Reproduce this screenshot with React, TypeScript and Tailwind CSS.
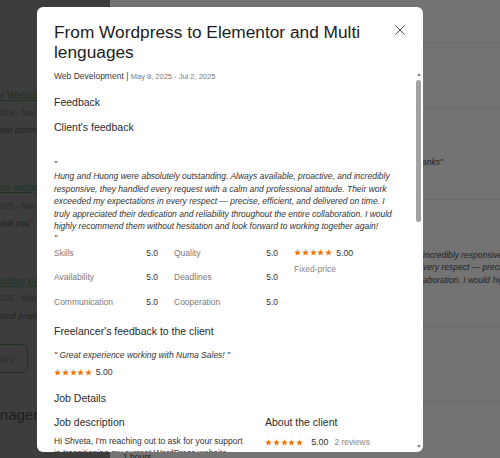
import React from 'react';

// small filled star used for all the rating rows
function Stars({ size = 7 }: { size?: number }) {
  return (
    <div className="flex gap-[0.8px]">
      {[0, 1, 2, 3, 4].map((i) => (
        <svg key={i} width={size} height={size} viewBox="0 0 10 10">
          <polygon
            points="5,0.4 6.35,3.55 9.7,3.8 7.15,6 7.95,9.4 5,7.6 2.05,9.4 2.85,6 0.3,3.8 3.65,3.55"
            fill="#ec7a10"
          />
        </svg>
      ))}
    </div>
  );
}

const ratings = [
  { left: 'Skills', leftValue: '5.0', right: 'Quality', rightValue: '5.0' },
  { left: 'Availability', leftValue: '5.0', right: 'Deadlines', rightValue: '5.0' },
  { left: 'Communication', leftValue: '5.0', right: 'Cooperation', rightValue: '5.0' },
];

const clientFeedback =
  'Hung and Huong were absolutely outstanding. Always available, proactive, and incredibly responsive, they handled every request with a calm and professional attitude. Their work exceeded my expectations in every respect — precise, efficient, and delivered on time. I truly appreciated their dedication and reliability throughout the entire collaboration. I would highly recommend them without hesitation and look forward to working together again!';

function BackgroundPage() {
  return (
    <div className="flex w-full h-full">
      {/* left part of the page, behind the darker overlay */}
      <div className="w-[110px] shrink-0 bg-[#3d3d3d] overflow-hidden pt-[88px] flex flex-col">
        <div className="-ml-[48px] whitespace-nowrap text-[10.5px] leading-[14px] text-[#1f3321] underline">Update our Website</div>
        <div className="-ml-[35px] mt-[5px] whitespace-nowrap text-[8.5px] leading-[12px] text-[#2a2a2a]">Jan 15, 2026 - Mar 2, 2026</div>
        <div className="-ml-[12px] mt-[5px] whitespace-nowrap text-[8.5px] leading-[12.4px] italic text-[#222]">"Great communication and quality"</div>

        <div className="-ml-[40px] mt-[44px] whitespace-nowrap text-[10.5px] leading-[14px] text-[#1f3321] underline">Wordpress webpage</div>
        <div className="-ml-[35px] mt-[6px] whitespace-nowrap text-[8.5px] leading-[12px] text-[#2a2a2a]">Jan 15, 2026 - Mar 2, 2026</div>
        <div className="-ml-[13px] mt-[5px] whitespace-nowrap text-[8.5px] leading-[12.4px] italic text-[#222]">"Thank you"</div>

        <div className="-ml-[12px] mt-[44px] whitespace-nowrap text-[10.5px] leading-[14px] text-[#1f3321] underline">Existing page</div>
        <div className="-ml-[35px] mt-[4px] whitespace-nowrap text-[8.5px] leading-[12px] text-[#2a2a2a]">Jan 15, 2025 - Mar 3, 2025</div>
        <div className="-ml-[8px] mt-[6px] whitespace-nowrap text-[8.5px] leading-[12.4px] italic text-[#222]">"Good project direction"</div>

        <div className="-ml-[40px] mt-[22px] w-[68px] h-[29px] shrink-0 rounded-[6px] border border-[#1f3321] flex items-center justify-end pr-[13px] text-[9.5px] text-[#1f3321]">
          History
        </div>
        <div className="-ml-[21px] mt-[33px] whitespace-nowrap text-[15px] leading-[18px] text-[#1e1e1e]">Manager</div>
      </div>

      {/* right part of the page */}
      <div className="flex-1 bg-[#737373] flex flex-col">
        <div className="h-[43px] shrink-0 border-b border-[#6a6a6a]" />
        <div className="h-[65px] shrink-0 border-b border-[#6a6a6a]" />
        <div className="h-[92px] shrink-0 border-b border-[#6a6a6a] pt-[48px]">
          <div className="w-[333px] text-right text-[8.5px] leading-[12.4px] italic text-[#222]">"Thanks"</div>
        </div>
        <div className="h-[127px] shrink-0 border-b border-[#6a6a6a] pt-[49px] pl-[313px] text-[8.5px] leading-[12.4px] italic text-[#222] whitespace-nowrap">
          <div>incredibly responsive, they handled every</div>
          <div>very respect — precise, efficient, and</div>
          <div>aboration. I would highly recommend</div>
        </div>
        <div className="h-[75px] shrink-0 border-b border-[#6a6a6a]" />
        <div className="pt-[49px] pl-[13px] text-[8.5px] leading-[12px] text-[#222]">1 hours</div>
      </div>
    </div>
  );
}

function FeedbackModal() {
  return (
    <div className="absolute left-[37px] top-[7px] w-[386px] h-[445px] bg-white rounded-[6px] overflow-hidden flex flex-col text-[#222]">
      {/* header */}
      <div className="flex items-start pt-[16px] pl-[17px] pr-[18px]">
        <h2 className="w-[330px] text-[17.3px] leading-[19.5px] text-[#1c1c1c]">
          From Wordpress to Elementor and Multi lenguages
        </h2>
        <button className="ml-auto mt-[1.5px] w-[10px] h-[10px] flex items-center justify-center">
          <svg width="10" height="10" viewBox="0 0 10 10">
            <path d="M0.5 0.5 L9.5 9.5 M9.5 0.5 L0.5 9.5" stroke="#444" strokeWidth="1" />
          </svg>
        </button>
      </div>

      {/* body */}
      <div className="pl-[17px] w-[367px] flex flex-col">
        <div className="mt-[8px] text-[8.5px] leading-[12px] whitespace-nowrap">
          <span className="text-[#3a3a3a]">Web Development</span>
          <span className="text-[#3a3a3a]"> | </span>
          <span className="text-[7.5px] text-[#7a7a7a]">May 8, 2025 - Jul 2, 2025</span>
        </div>

        <h3 className="mt-[12px] text-[10.5px] leading-[14px] text-[#2a2a2a]">Feedback</h3>
        <h4 className="mt-[11px] text-[10.5px] leading-[14px] text-[#2a2a2a]">Client's feedback</h4>

        <p className="mt-[24px] w-[345px] text-[8.5px] leading-[12.4px] italic text-[#333]">
          "
          <br />
          {clientFeedback}
          <br />"
        </p>

        <div className="mt-[2px] grid grid-cols-[104px_104px_1fr] gap-x-4 gap-y-[12.5px] text-[8.5px] leading-[12px]">
          {ratings.map((r, i) => (
            <React.Fragment key={r.left}>
              <div className="flex justify-between">
                <span className="text-[#7a7a7a]">{r.left}</span>
                <span className="text-[#333]">{r.leftValue}</span>
              </div>
              <div className="flex justify-between">
                <span className="text-[#7a7a7a]">{r.right}</span>
                <span className="text-[#333]">{r.rightValue}</span>
              </div>
              {i === 0 ? (
                <div className="row-span-3 flex flex-col">
                  <div className="h-[12px] flex items-center gap-[4px]">
                    <Stars />
                    <span className="text-[8.7px] text-[#333]">5.00</span>
                  </div>
                  <div className="mt-[4.5px] text-[8.5px] text-[#888]">Fixed-price</div>
                </div>
              ) : null}
            </React.Fragment>
          ))}
        </div>

        <h4 className="mt-[16px] text-[10.5px] leading-[14px] text-[#2a2a2a]">Freelancer's feedback to the client</h4>
        <p className="mt-[11px] text-[8.5px] leading-[12.4px] italic text-[#333]">" Great experience working with Numa Sales! "</p>
        <div className="mt-[5.5px] h-[12px] flex items-center gap-[3.5px]">
          <Stars />
          <span className="text-[8.7px] text-[#333]">5.00</span>
        </div>

        <h3 className="mt-[12px] text-[10.5px] leading-[14px] text-[#2a2a2a]">Job Details</h3>

        <div className="mt-[10.5px] grid grid-cols-[190px_1fr] gap-x-[21px]">
          <div className="flex flex-col">
            <h4 className="text-[10.5px] leading-[14px] text-[#2a2a2a]">Job description</h4>
            <p className="mt-[5.5px] text-[8.5px] leading-[12.5px] text-[#333]">
              Hi Shveta, I'm reaching out to ask for your support in transitioning my current WordPress website from its existing builder to Elementor.
            </p>
          </div>
          <div className="flex flex-col">
            <h4 className="text-[10.5px] leading-[14px] text-[#2a2a2a]">About the client</h4>
            <div className="mt-[7px] h-[12px] flex items-center">
              <Stars />
              <span className="ml-[8px] text-[8.9px] text-[#333]">5.00</span>
              <span className="ml-[6px] text-[8.4px] text-[#888]">2 reviews</span>
            </div>
          </div>
        </div>
      </div>

      {/* scrollbar */}
      <div className="absolute right-[2px] top-[65px] bottom-[1px] w-[5px] flex flex-col items-center">
        <div className="mt-[1px] w-0 h-0 border-l-[2px] border-r-[2px] border-b-[3px] border-l-transparent border-r-transparent border-b-[#8a8a8a]" />
        <div className="mt-[4px] w-[4.5px] h-[142px] rounded-full bg-[#a2a2a2]" />
        <div className="flex-1" />
        <div className="mb-[3px] w-0 h-0 border-l-[2px] border-r-[2px] border-t-[3px] border-l-transparent border-r-transparent border-t-[#8a8a8a]" />
      </div>
    </div>
  );
}

export default function App() {
  return (
    <div className="relative w-[500px] h-[458px] overflow-hidden font-['Liberation_Sans',Arial,sans-serif]">
      <BackgroundPage />
      <FeedbackModal />
    </div>
  );
}
